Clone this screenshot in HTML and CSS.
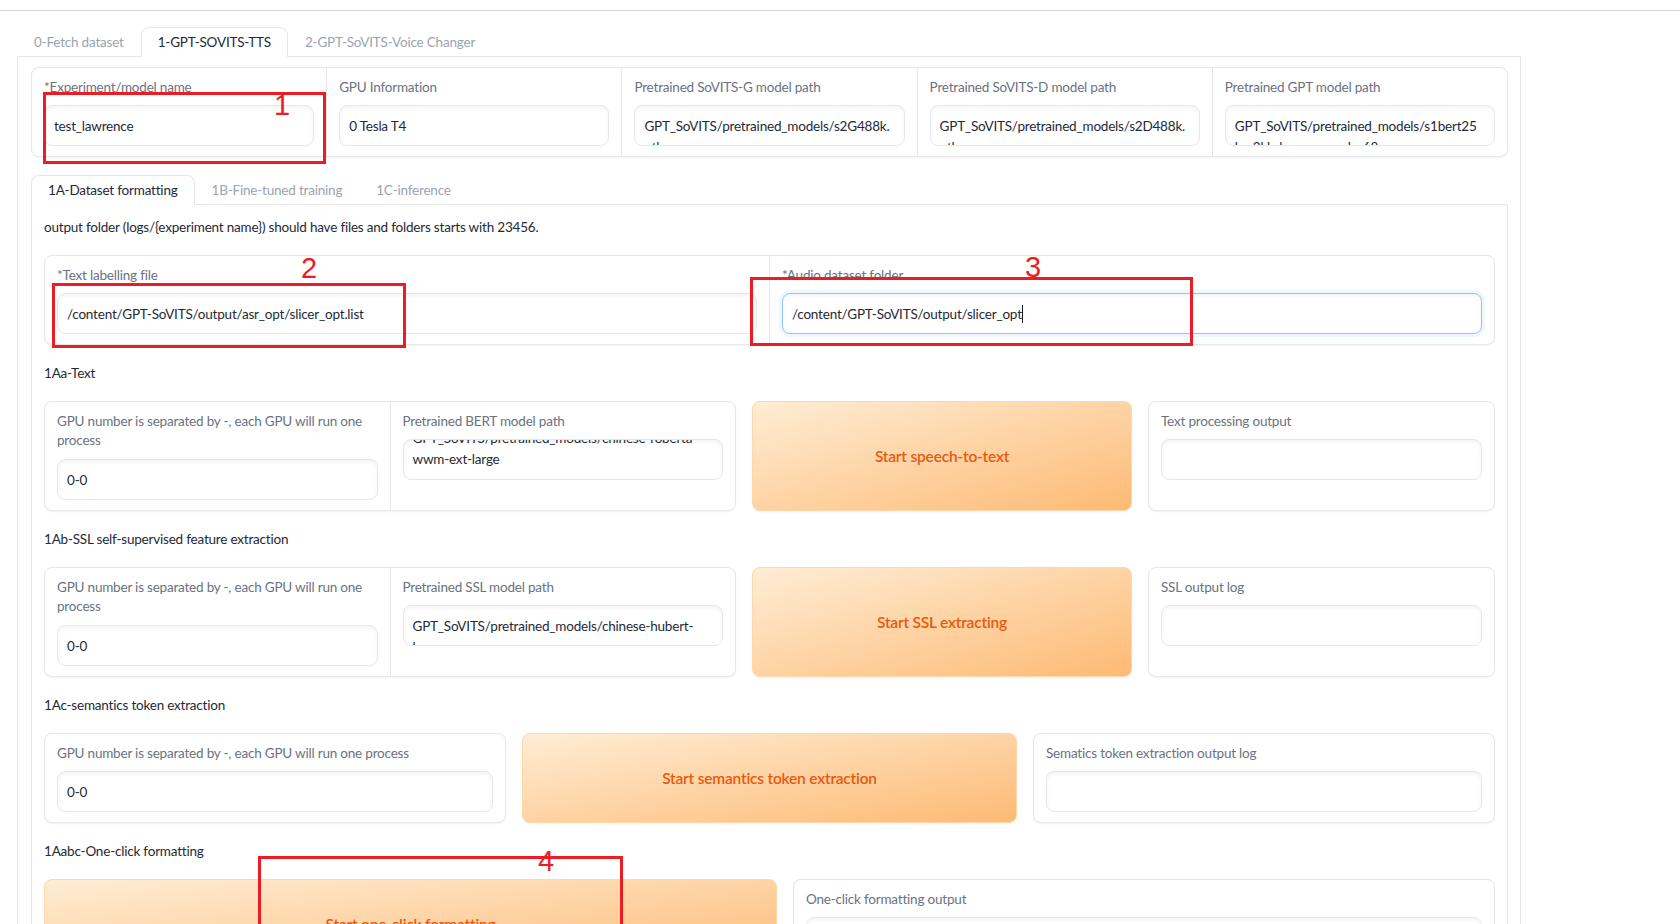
FILE: index.html
```html
<!DOCTYPE html>
<html>
<head>
<meta charset="utf-8">
<link rel="stylesheet" href="styles.css">
</head>
<body>
<div class="topline"></div>
<div class="app">
  <div class="tabnav">
    <div class="tab">0-Fetch dataset</div>
    <div class="tab sel">1-GPT-SOVITS-TTS</div>
    <div class="tab">2-GPT-SoVITS-Voice Changer</div>
  </div>
  <div class="panel outer">
    <div class="form">
      <div class="field">
        <div class="label">*Experiment/model name</div>
        <div class="input"><div class="line">test_lawrence</div></div>
      </div>
      <div class="field">
        <div class="label">GPU Information</div>
        <div class="input"><div class="line">0 Tesla T4</div></div>
      </div>
      <div class="field">
        <div class="label">Pretrained SoVITS-G model path</div>
        <div class="input"><div class="line">GPT_SoVITS/pretrained_models/s2G488k.</div><div class="line">pth</div></div>
      </div>
      <div class="field">
        <div class="label">Pretrained SoVITS-D model path</div>
        <div class="input"><div class="line">GPT_SoVITS/pretrained_models/s2D488k.</div><div class="line">pth</div></div>
      </div>
      <div class="field">
        <div class="label">Pretrained GPT model path</div>
        <div class="input"><div class="line">GPT_SoVITS/pretrained_models/s1bert25</div><div class="line">hz-2kh-longer-epoch=68e-</div></div>
      </div>
    </div>

    <div class="inner">
      <div class="tabnav">
        <div class="tab sel">1A-Dataset formatting</div>
        <div class="tab">1B-Fine-tuned training</div>
        <div class="tab">1C-inference</div>
      </div>
      <div class="panel">
        <div class="md">output folder (logs/{experiment name}) should have files and folders starts with 23456.</div>

        <div class="form">
          <div class="field">
            <div class="label">*Text labelling file</div>
            <div class="input"><div class="line">/content/GPT-SoVITS/output/asr_opt/slicer_opt.list</div></div>
          </div>
          <div class="field">
            <div class="label">*Audio dataset folder</div>
            <div class="input focus"><div class="line">/content/GPT-SoVITS/output/slicer_opt<span class="caret"></span></div></div>
          </div>
        </div>

        <div class="md">1Aa-Text</div>
        <div class="row r1">
          <div class="form">
            <div class="field">
              <div class="label">GPU number is separated by -, each GPU will run one<br>process</div>
              <div class="input"><div class="line">0-0</div></div>
            </div>
            <div class="field">
              <div class="label">Pretrained BERT model path</div>
              <div class="input"><div class="scrolled"><div class="line">GPT_SoVITS/pretrained_models/chinese-roberta-</div><div class="line">wwm-ext-large</div></div></div>
            </div>
          </div>
          <button class="btn">Start speech-to-text</button>
          <div class="form">
            <div class="field">
              <div class="label">Text processing output</div>
              <div class="input"><div class="line"></div></div>
            </div>
          </div>
        </div>

        <div class="md">1Ab-SSL self-supervised feature extraction</div>
        <div class="row r1">
          <div class="form">
            <div class="field">
              <div class="label">GPU number is separated by -, each GPU will run one<br>process</div>
              <div class="input"><div class="line">0-0</div></div>
            </div>
            <div class="field">
              <div class="label">Pretrained SSL model path</div>
              <div class="input"><div class="line">GPT_SoVITS/pretrained_models/chinese-hubert-</div><div class="line">base</div></div>
            </div>
          </div>
          <button class="btn">Start SSL extracting</button>
          <div class="form">
            <div class="field">
              <div class="label">SSL output log</div>
              <div class="input"><div class="line"></div></div>
            </div>
          </div>
        </div>

        <div class="md">1Ac-semantics token extraction</div>
        <div class="row r3">
          <div class="form">
            <div class="field">
              <div class="label">GPU number is separated by -, each GPU will run one process</div>
              <div class="input"><div class="line">0-0</div></div>
            </div>
          </div>
          <button class="btn">Start semantics token extraction</button>
          <div class="form">
            <div class="field">
              <div class="label">Sematics token extraction output log</div>
              <div class="input"><div class="line"></div></div>
            </div>
          </div>
        </div>

        <div class="md">1Aabc-One-click formatting</div>
        <div class="row r4">
          <button class="btn">Start one-click formatting</button>
          <div class="form">
            <div class="field">
              <div class="label">One-click formatting output</div>
              <div class="input"><div class="line"></div></div>
            </div>
          </div>
        </div>
      </div>
    </div>
  </div>
</div>

<div class="anno a1"></div><span class="num n1">1</span>
<div class="anno a2"></div><span class="num n2">2</span>
<div class="anno a3"></div><span class="num n3">3</span>
<div class="anno a4"></div><span class="num n4">4</span>
</body>
</html>
```

FILE: styles.css
```css
html, body {
  margin: 0;
  padding: 0;
  overflow: hidden;
  background: #ffffff;
}
body {
  position: relative;
  width: 1680px;
  height: 924px;
  font-family: Lato, "Noto Sans", sans-serif;
  font-size: 13.5px;
  letter-spacing: -0.2px;
  color: #1f2937;
}
.topline {
  height: 10px;
  border-bottom: 1px solid #d4d4d4;
}
.app {
  margin: 16px 0 0 17px;
  width: 1504px;
}
.tabnav {
  display: flex;
  border-bottom: 1px solid #e5e7eb;
}
.tab {
  padding: 5px 16px 4px;
  line-height: 19.6px;
  border: 1px solid transparent;
  border-bottom: none;
  border-radius: 8px 8px 0 0;
  margin-bottom: -1px;
  color: #9ca3af;
  white-space: nowrap;
}
.tab.sel {
  border-color: #e5e7eb;
  background: #ffffff;
  color: #1f2937;
}
.panel {
  border: 1px solid #e5e7eb;
  border-top: none;
  padding: 10px 12px 40px;
  display: flex;
  flex-direction: column;
  gap: 16px;
}
.panel.outer {
  padding: 10px 12px 40px 13px;
  gap: 0;
}
.inner {
  margin-top: 18px;
}
.md {
  height: 24px;
  line-height: 24px;
  color: #1f2937;
}
.form {
  display: flex;
  gap: 1px;
  background: #e5e7eb;
  border: 1px solid #e5e7eb;
  border-radius: 8px;
  overflow: hidden;
  box-shadow: 0 1px 2px rgba(0, 0, 0, 0.05);
}
.field {
  flex: 1 1 0;
  min-width: 0;
  background: #ffffff;
  padding: 10px 12px;
}
.label {
  color: #6b7280;
  line-height: 19.4px;
  margin-bottom: 8px;
  white-space: nowrap;
}
.input {
  height: 21px;
  line-height: 21px;
  padding: 10px 9px 8px;
  border: 1px solid #e5e7eb;
  border-radius: 8px;
  overflow: hidden;
  background: #ffffff;
  box-shadow: inset 0 2px 4px rgba(0, 0, 0, 0.05);
  color: #1f2937;
}
.input.focus {
  border-color: #93c5fd;
  box-shadow: 0 0 0 3px #eff6ff, inset 0 2px 4px rgba(0, 0, 0, 0.05);
}
.line {
  height: 21px;
  white-space: nowrap;
}
.scrolled {
  margin-top: -22px;
}
.caret {
  display: inline-block;
  width: 1px;
  height: 18px;
  background: #111827;
  vertical-align: -4px;
}
.row {
  display: grid;
  gap: 16px;
}
.r1 {
  grid-template-columns: 692fr 380fr 347fr;
}
.r3 {
  grid-template-columns: 462fr 495fr 462fr;
}
.r4 {
  grid-template-columns: 733fr 702fr;
}
.btn {
  display: flex;
  align-items: center;
  justify-content: center;
  border: 1px solid #fed7aa;
  border-radius: 8px;
  background: linear-gradient(to bottom right, #ffedd5, #fdba74);
  color: #ea580c;
  font-family: Lato, "Noto Sans", sans-serif;
  font-size: 15.5px;
  letter-spacing: -0.2px;
  font-weight: 600;
  box-shadow: 0 1px 2px rgba(0, 0, 0, 0.05);
  padding: 0;
  margin: 0;
}

/* red annotations drawn over the screenshot */
.anno {
  position: absolute;
  box-sizing: border-box;
  border: 3px solid #ed1c24;
}
.a1 { left: 43px; top: 92px; width: 283px; height: 72px; }
.a2 { left: 52px; top: 283px; width: 354px; height: 65px; }
.a3 { left: 750px; top: 277px; width: 443px; height: 69px; }
.a4 { left: 258px; top: 856px; width: 365px; height: 120px; }
.num {
  position: absolute;
  font-family: "Liberation Sans", Arial, sans-serif;
  font-size: 29px;
  line-height: 29px;
  letter-spacing: 0;
  color: #ed1c24;
}
.n1 { left: 274px; top: 91px; }
.n2 { left: 301px; top: 254px; }
.n3 { left: 1025px; top: 253px; }
.n4 { left: 538px; top: 847px; }
```
